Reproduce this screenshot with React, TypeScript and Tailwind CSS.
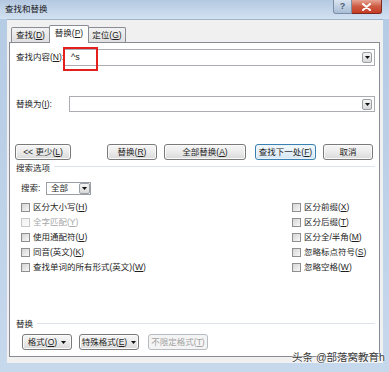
import type { ReactNode } from "react";

const FONT = { fontFamily: '"Liberation Sans", "Noto Sans CJK SC", sans-serif' };

function Mn({ text, k, colon = false }: { text: string; k: string; colon?: boolean }) {
  return (
    <span className="whitespace-nowrap">
      {text}(<span className="underline underline-offset-1">{k}</span>){colon ? ":" : ""}
    </span>
  );
}

function Arrow({ className = "" }: { className?: string }) {
  return (
    <svg width="5" height="3" viewBox="0 0 5 3" className={className}>
      <polygon points="0,0 5,0 2.5,3" fill="#111" />
    </svg>
  );
}

function DropBtn({ className = "" }: { className?: string }) {
  return (
    <div
      className={[
        "flex items-center justify-center border border-[#9aa0a6] rounded-[2px] bg-linear-to-b from-[#f4f4f4] to-[#d8d8d8]",
        className,
      ].join(" ")}
    >
      <Arrow />
    </div>
  );
}

function Btn({
  children,
  className = "",
  variant = "normal",
}: {
  children: ReactNode;
  className?: string;
  variant?: "normal" | "default" | "disabled";
}) {
  const look =
    variant === "default"
      ? "border-[#3c7fb1] bg-linear-to-b from-[#f4f9fd] to-[#d6e6f3] text-[#1e1e1e] shadow-[inset_0_0_0_1px_#e9f4fc]"
      : variant === "disabled"
        ? "border-[#b6bbbf] bg-[#f4f4f4] text-[#a2a2a2]"
        : "border-[#7a7a7a] bg-linear-to-b from-[#f6f6f6] via-[#ebebeb] to-[#d9d9d9] text-[#1e1e1e] shadow-[inset_0_0_0_1px_#fbfbfb]";
  return (
    <div
      className={[
        "flex h-[16px] items-center justify-center gap-[4px] rounded-[3px] border text-[8.5px] leading-none",
        look,
        className,
      ].join(" ")}
    >
      {children}
    </div>
  );
}

function Check({ children, disabled = false }: { children: ReactNode; disabled?: boolean }) {
  return (
    <div className="flex h-[15px] items-center gap-[3px]">
      <div
        className={[
          "h-[9px] w-[9px] border bg-linear-to-br",
          disabled
            ? "border-[#c8c8c8] from-[#f0f0f0] to-[#fbfbfb]"
            : "border-[#8e8f8f] from-[#d4d4d4] to-[#f8f8f8]",
        ].join(" ")}
      />
      <span className={disabled ? "text-[#a8a8a8]" : "text-[#1e1e1e]"}>{children}</span>
    </div>
  );
}

export default function App() {
  return (
    <div
      className="relative flex h-[372px] w-[389px] flex-col overflow-hidden bg-linear-to-b from-[#b4cbe4] to-[#c6d8ec] text-[8.5px] leading-none text-[#1e1e1e]"
      style={FONT}
    >
      {/* title bar */}
      <div className="relative flex h-[19px] shrink-0 items-center bg-linear-to-b from-[#b3c8e0] to-[#d3e2f2] pl-[5px]">
        <span className="text-[8.5px] text-[#1a1a1a]">查找和替换</span>
        <div className="absolute right-[7px] top-0 flex h-[14px]">
          <div className="flex w-[19px] items-center justify-center rounded-bl-[3px] border border-t-0 border-[#7c8ea6] bg-linear-to-b from-[#d9e4f0] to-[#a9bdd5] text-[9px] font-bold text-[#4b5d74]">
            ?
          </div>
          <div className="flex w-[30px] items-center justify-center rounded-br-[3px] border border-l-0 border-t-0 border-[#7a2a20] bg-linear-to-b from-[#e6a293] via-[#cc5a42] to-[#c53c23]">
            <svg width="9" height="8" viewBox="0 0 9 8">
              <path d="M1 1 L8 7 M8 1 L1 7" stroke="#fff" strokeWidth="2" strokeLinecap="round" />
            </svg>
          </div>
        </div>
      </div>

      {/* client */}
      <div className="ml-[7px] flex h-[344px] w-[376px] flex-col border-t border-[#9fb3c9] bg-[#f0f0f0] pl-[2px] pt-[5px]">
        {/* tabs */}
        <div className="flex h-[17px] items-end pl-[2px]">
          <div className="flex h-[15px] w-[39px] items-center justify-center rounded-t-[2px] border border-b-0 border-[#898c95] bg-linear-to-b from-[#f2f2f2] to-[#e0e0e0]">
            <Mn text="查找" k="D" />
          </div>
          <div className="relative z-10 -mx-px -mb-px flex h-[18px] w-[40px] items-center justify-center rounded-t-[2px] border border-b-0 border-[#898c95] bg-white pb-[2px]">
            <Mn text="替换" k="P" />
          </div>
          <div className="flex h-[15px] w-[38px] items-center justify-center rounded-t-[2px] border border-b-0 border-[#898c95] bg-linear-to-b from-[#f2f2f2] to-[#e0e0e0]">
            <Mn text="定位" k="G" />
          </div>
        </div>

        {/* panel */}
        <div className="flex h-[315px] w-[371px] flex-col border border-[#898c95] bg-white pr-[4px]">
          <div className="mt-[6px] flex h-[17px] items-center pl-[6px]">
            <div className="w-[48px]">
              <Mn text="查找内容" k="N" colon />
            </div>
            <div className="flex h-full flex-1 items-center border border-[#abadb3] pl-[6px] pr-[2px]">
              <span className="flex-1 text-[9px] text-[#222]">^s</span>
              <DropBtn className="h-[11px] w-[10px]" />
            </div>
          </div>

          <div className="mt-[30px] flex h-[16px] items-center pl-[6px]">
            <div className="w-[53px]">
              <Mn text="替换为" k="I" colon />
            </div>
            <div className="flex h-full flex-1 items-center justify-end border border-[#abadb3] pr-[2px]">
              <DropBtn className="h-[11px] w-[10px]" />
            </div>
          </div>

          <div className="mt-[32px] flex items-center pl-[5px]">
            <Btn className="w-[56px]">
              <span>
                &lt;&lt; 更少(<span className="underline">L</span>)
              </span>
            </Btn>
            <Btn className="ml-[36px] w-[50px]">
              <Mn text="替换" k="R" />
            </Btn>
            <Btn className="ml-[7px] w-[82px]">
              <Mn text="全部替换" k="A" />
            </Btn>
            <Btn className="ml-[9px] w-[61px]" variant="default">
              <Mn text="查找下一处" k="F" />
            </Btn>
            <Btn className="ml-[7px] w-[50px]">取消</Btn>
          </div>

          <div className="mt-[3px] flex h-[10px] items-center pl-[6px]">
            <span>搜索选项</span>
            <div className="ml-[4px] mt-[-3px] h-px flex-1 bg-[#dde3e8]" />
          </div>

          <div className="mt-[9px] flex h-[13px] items-center pl-[11px]">
            <span className="w-[25px]">搜索:</span>
            <div className="flex h-full w-[45px] items-center border border-[#9a9fa6] bg-white">
              <span className="flex-1 pl-[4px]">全部</span>
              <DropBtn className="h-[11px] w-[11px]" />
            </div>
          </div>

          <div className="mt-[5px] flex pl-[11px]">
            <div className="flex w-[271px] flex-col">
              <Check>
                <Mn text="区分大小写" k="H" />
              </Check>
              <Check disabled>
                <Mn text="全字匹配" k="Y" />
              </Check>
              <Check>
                <Mn text="使用通配符" k="U" />
              </Check>
              <Check>
                <Mn text="同音(英文)" k="K" />
              </Check>
              <Check>
                <Mn text="查找单词的所有形式(英文)" k="W" />
              </Check>
            </div>
            <div className="flex flex-col">
              <Check>
                <Mn text="区分前缀" k="X" />
              </Check>
              <Check>
                <Mn text="区分后缀" k="T" />
              </Check>
              <Check>
                <Mn text="区分全/半角" k="M" />
              </Check>
              <Check>
                <Mn text="忽略标点符号" k="S" />
              </Check>
              <Check>
                <Mn text="忽略空格" k="W" />
              </Check>
            </div>
          </div>

          <div className="mt-[44px] flex h-[10px] items-center pl-[6px]">
            <span>替换</span>
            <div className="ml-[4px] mt-[-2px] h-px flex-1 bg-[#dde3e8]" />
          </div>

          <div className="mt-[5px] flex items-center pl-[12px]">
            <Btn className="h-[15px] w-[50px]">
              <Mn text="格式" k="O" />
              <Arrow />
            </Btn>
            <Btn className="ml-[7px] h-[15px] w-[60px]">
              <Mn text="特殊格式" k="E" />
              <Arrow />
            </Btn>
            <Btn className="ml-[9px] h-[15px] w-[60px]" variant="disabled">
              <Mn text="不限定格式" k="T" />
            </Btn>
          </div>
        </div>
      </div>

      {/* annotation box */}
      <div className="absolute left-[63px] top-[47px] h-[24px] w-[35px] border-2 border-[#e3201e]" />

      {/* watermark */}
      <div
        className="absolute left-[292px] top-[352px] whitespace-nowrap text-[10.5px] text-[#3a3a3a]"
        style={{ textShadow: "0 0 2px #fff, 0 0 2px #fff" }}
      >
        头条 @部落窝教育h
      </div>
    </div>
  );
}
